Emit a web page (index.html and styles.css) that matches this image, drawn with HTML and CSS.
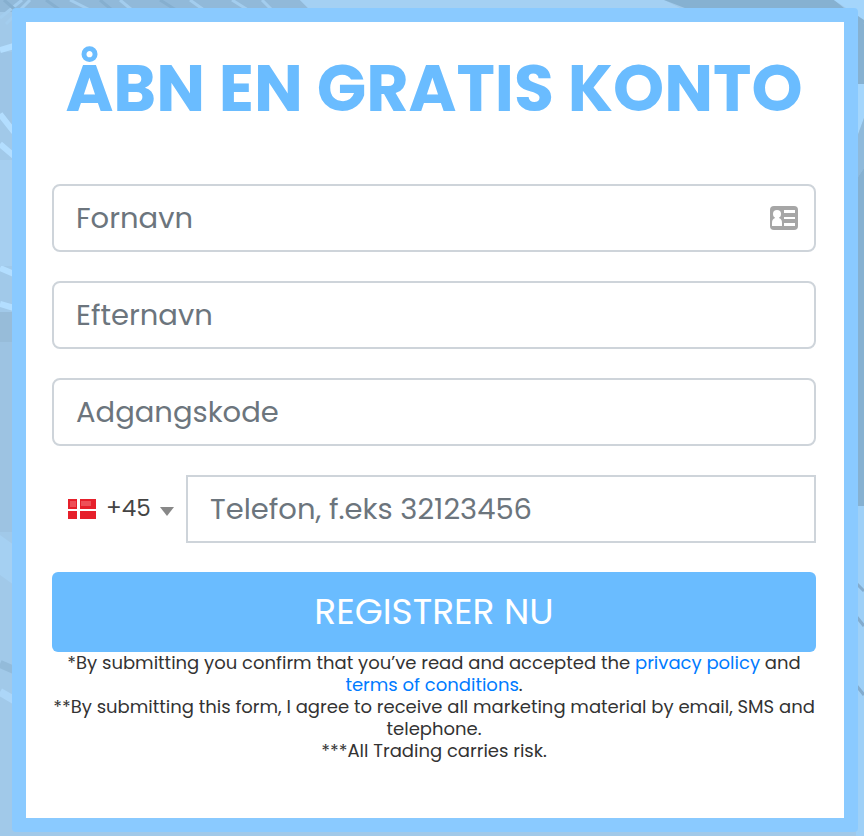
FILE: index.html
```html
<!DOCTYPE html>
<html lang="da" dir="ltr">
  <head>
    <meta charset="utf-8">
    <meta name="viewport" content="width=device-width, initial-scale=1">
    <title>Åbn en gratis konto</title>
    <link rel="stylesheet" href="styles.css">
  </head>
  <body>
    <svg class="backdrop" viewBox="0 0 864 836" preserveAspectRatio="none" aria-hidden="true">
      <rect width="864" height="836" fill="#a1c9e9"/>
      <!-- top edge -->
      <path d="M0 0h300l12 12H0z" fill="#91b9d9"/>
      <path d="M22 0L0 18M30 0L6 24M70 0l20 10M120 0l12 10M190 0l14 10M232 0l16 10M262 0l10 10" stroke="#a3cdee" stroke-width="3"/>
      <path d="M4 0l16 14M46 0l14 10M100 0l12 10M160 0l16 10" stroke="#86afcf" stroke-width="3"/>
      <path d="M300 0h364l20 10H310z" fill="#a4d0f3"/>
      <path d="M664 0h170l30 24v-10L834 10H690z" fill="#86b1d1"/>
      <path d="M834 0h30v20z" fill="#a4d5fb"/>
      <!-- left edge -->
      <path d="M0 52h14v76L0 112z" fill="#9dc5e6"/>
      <path d="M0 50l14-4M0 114l14 18M0 144l14 12M0 268l14 6M0 304l14 4" stroke="#b3deff" stroke-width="6"/>
      <path d="M0 160h14v106H0z" fill="#a6cff0"/>
      <path d="M0 312h14v30H0z" fill="#97bcd9"/>
      <path d="M0 342h14v190H0z" fill="#9dc3e2"/>
      <path d="M0 535l14 10v40l-14-10z" fill="#a5d0f2"/>
      <path d="M0 664l14 6" stroke="#93bbda" stroke-width="8"/>
      <path d="M0 692l14 8" stroke="#acd6f8" stroke-width="8"/>
      <!-- right edge -->
      <path d="M856 14l8 10v60h-8z" fill="#86b1d1"/>
      <path d="M856 84h8v34l-8 22z" fill="#a4d6fc"/>
      <path d="M856 140l8-22v50l-8 12z" fill="#8fbadb"/>
      <path d="M856 180l8-12v338h-8z" fill="#86b1d1"/>
      <path d="M856 506h8v330h-8z" fill="#9ed0f7"/>
      <path d="M856 583l8 8M856 616l8 10M856 685l8 10" stroke="#83acce" stroke-width="3"/>
    </svg>

    <main class="card">
      <h1>ÅBN EN GRATIS KONTO</h1>
      <form class="signup">
        <div class="field">
          <input type="text" name="firstname" placeholder="Fornavn" aria-label="Fornavn">
          <svg class="contact_icon" width="28" height="24" viewBox="0 0 28 24" aria-hidden="true">
            <rect width="28" height="24" rx="4" fill="#a6a6a6"/>
            <circle cx="7" cy="8" r="4" fill="#fff"/>
            <path d="M5 10h4v2c2 1 3 2 3 5v3H2v-3c0-3 1-4 3-5z" fill="#fff"/>
            <path d="M14 4h11v3H14zM14 11h11v2H14zM14 17h11v3H14z" fill="#fff"/>
          </svg>
        </div>
        <input type="text" name="lastname" placeholder="Efternavn" aria-label="Efternavn">
        <input type="password" name="password" placeholder="Adgangskode" aria-label="Adgangskode">
        <div class="phone">
          <div class="country">
            <svg class="flag" width="28" height="20" viewBox="0 0 28 20" aria-hidden="true">
              <rect width="28" height="20" fill="#e6202b"/>
              <path d="M2 2h6v6H2zM13 2h10v5H13z" fill="#ee5058"/>
              <path d="M9 0h3v20H9zM0 10h28v2H0z" fill="#fff"/>
            </svg>
            <select name="prefix" aria-label="Landekode">
              <option value="45" selected>+45</option>
            </select>
            <svg class="arrow" width="14" height="9" viewBox="0 0 14 9" aria-hidden="true">
              <path d="M0 0h14L7 9z" fill="#888"/>
            </svg>
          </div>
          <input type="tel" name="phone" placeholder="Telefon, f.eks 32123456" aria-label="Telefon">
        </div>
        <button type="submit">REGISTRER NU</button>
      </form>
      <div class="terms">
        *By submitting you confirm that you’ve read and accepted the <a href="#privacy">privacy policy</a> and <a href="#terms">terms of conditions</a>.<br>
        **By submitting this form, I agree to receive all marketing material by email, SMS and telephone.<br>
        ***All Trading carries risk.
      </div>
    </main>
  </body>
</html>
```

FILE: styles.css
```css
* {
  box-sizing: border-box;
}
body {
  margin: 0;
  padding: 8px 6px 4px 12px;
  font-family: Poppins, Inter, sans-serif;
  color: #333;
}
.backdrop {
  position: fixed;
  top: 0;
  left: 0;
  width: 100%;
  height: 100%;
  z-index: -1;
}
.card {
  padding: 26px 28px 56px 26px;
  border: 14px solid #8acaff;
  border-radius: 4px;
  background-color: #fff;
}
h1 {
  margin: 0 0 54px;
  font-size: 65px;
  font-weight: 700;
  line-height: 82px;
  text-align: center;
  white-space: nowrap;
  color: #6abcff;
}
.signup {
  display: flex;
  flex-direction: column;
  gap: 29px;
}
.field {
  position: relative;
}
input {
  display: block;
  width: 100%;
  height: 68px;
  padding: 0 22px;
  border: 2px solid #ced4da;
  border-radius: 8px;
  background-color: #fff;
  font-family: inherit;
  font-size: 29px;
  color: #495057;
}
input::placeholder {
  color: #6c757d;
  opacity: 1;
}
.contact_icon {
  position: absolute;
  top: 22px;
  right: 18px;
}
.phone {
  display: flex;
}
.country {
  position: relative;
  flex: 0 0 134px;
  display: flex;
  align-items: center;
  padding-left: 16px;
}
.country select {
  flex: 1;
  height: 68px;
  padding: 0 0 2px 10px;
  border: 0;
  appearance: none;
  background: none;
  font-family: inherit;
  font-size: 23px;
  color: #444;
}
.arrow {
  position: absolute;
  top: 32px;
  right: 12px;
  pointer-events: none;
}
.phone input {
  flex: 1;
  min-width: 0;
  border-radius: 0;
}
button {
  height: 80px;
  padding: 0 0 2px;
  border: 0;
  border-radius: 6px;
  background-color: #6abcff;
  font-family: inherit;
  font-size: 36px;
  color: #fff;
  cursor: pointer;
}
.terms {
  font-size: 18px;
  line-height: 22px;
  text-align: center;
}
.terms a {
  color: #007bff;
  text-decoration: none;
}
```
